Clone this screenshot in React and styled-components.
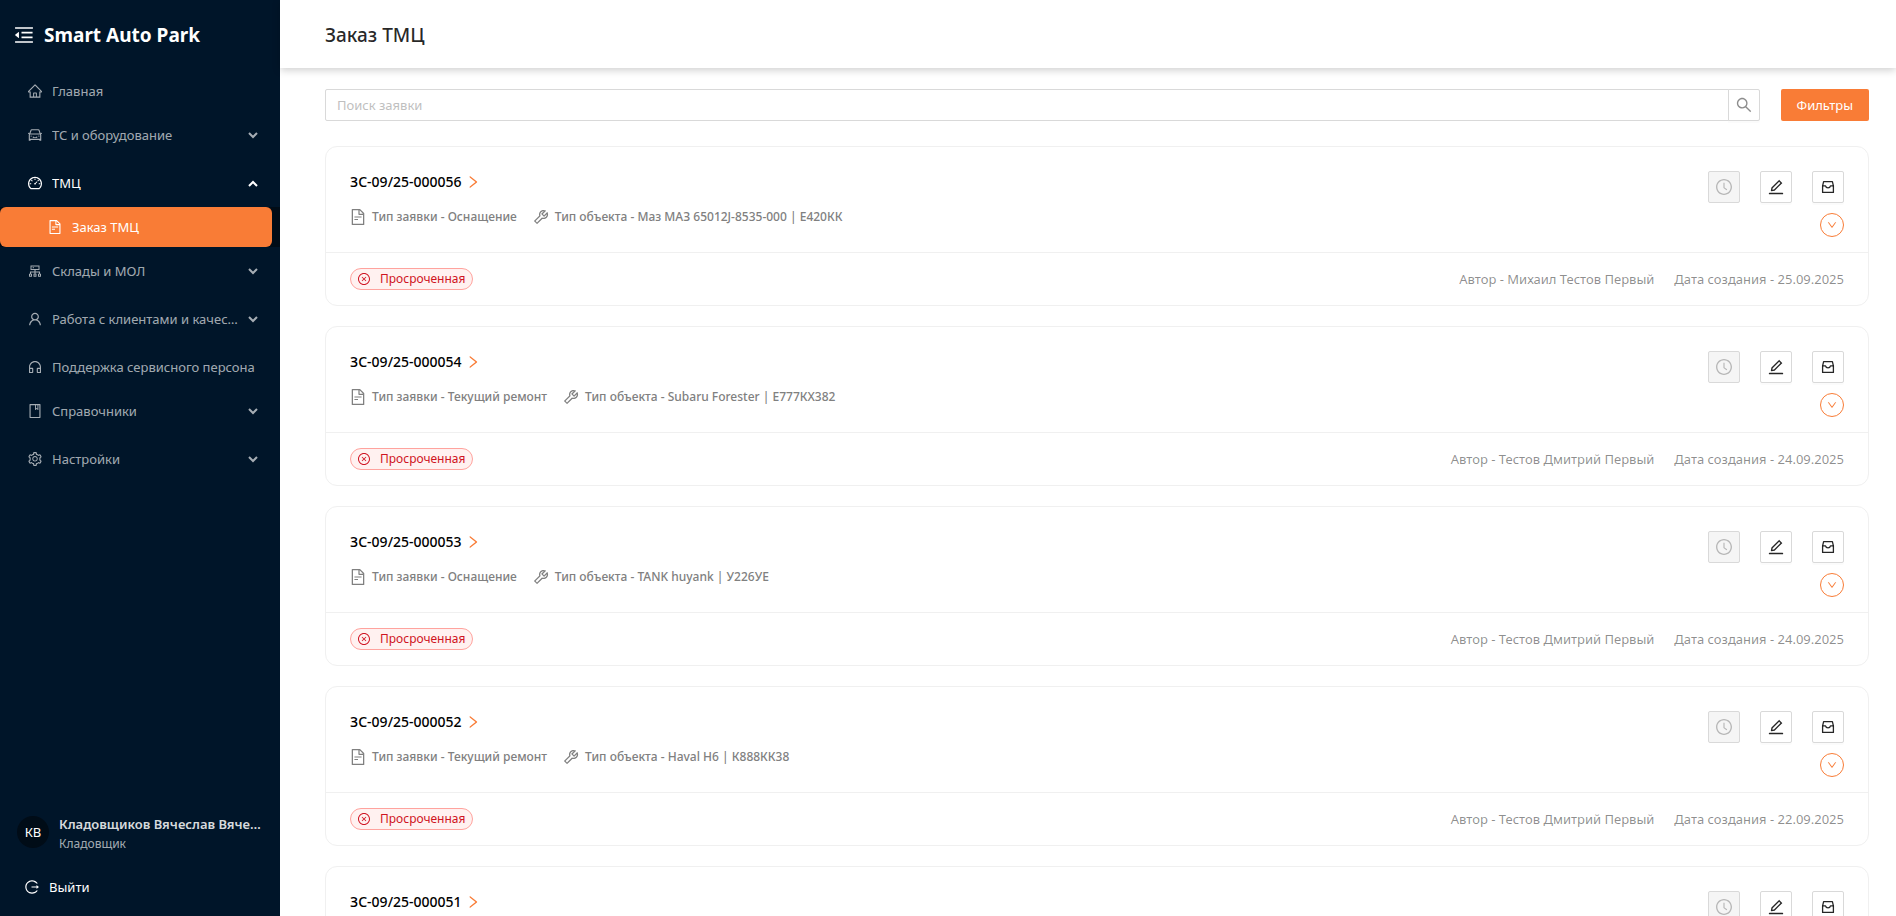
import React, { useState } from 'react';
import styled, { createGlobalStyle } from 'styled-components';
import {
    AiOutlineHome,
    AiOutlineCar,
    AiOutlineDashboard,
    AiOutlineFileText,
    AiOutlineCluster,
    AiOutlineUser,
    AiOutlineCustomerService,
    AiOutlineBook,
    AiOutlineSetting,
    AiOutlineLogout,
    AiOutlineSearch,
    AiOutlineClockCircle,
    AiOutlineEdit,
    AiOutlineMenuFold,
    AiOutlineRight,
    AiOutlineDown,
    AiOutlineTool,
    AiOutlineCloseCircle,
} from 'react-icons/ai';

const menu = [
    { label: 'Главная', icon: AiOutlineHome },
    { label: 'ТС и оборудование', icon: AiOutlineCar, sub: true },
    { label: 'ТМЦ', icon: AiOutlineDashboard, sub: true, items: ['Заказ ТМЦ'] },
    { label: 'Склады и МОЛ', icon: AiOutlineCluster, sub: true },
    { label: 'Работа с клиентами и качеством', icon: AiOutlineUser, sub: true },
    { label: 'Поддержка сервисного персона', icon: AiOutlineCustomerService },
    { label: 'Справочники', icon: AiOutlineBook, sub: true },
    { label: 'Настройки', icon: AiOutlineSetting, sub: true },
];

const orders = [
    { id: 'ЗС-09/25-000056', type: 'Оснащение', object: 'Маз МАЗ 65012J-8535-000 | Е420КК', author: 'Михаил Тестов Первый', date: '25.09.2025' },
    { id: 'ЗС-09/25-000054', type: 'Текущий ремонт', object: 'Subaru Forester | Е777КХ382', author: 'Тестов Дмитрий Первый', date: '24.09.2025' },
    { id: 'ЗС-09/25-000053', type: 'Оснащение', object: 'TANK huyank | У226УЕ', author: 'Тестов Дмитрий Первый', date: '24.09.2025' },
    { id: 'ЗС-09/25-000052', type: 'Текущий ремонт', object: 'Haval H6 | К888КК38', author: 'Тестов Дмитрий Первый', date: '22.09.2025' },
    { id: 'ЗС-09/25-000051', type: 'Оснащение', object: 'Haval H6 | К888КК38', author: 'Тестов Дмитрий Первый', date: '22.09.2025' },
];

// ant icons keep a 64 unit margin round the glyph, crop it
function Icon({ of: Glyph }) {
    return <Glyph viewBox="64 64 896 896" />;
}

function ArchiveIcon() {
    return (
        <svg width="14" height="14" viewBox="0 0 14 14" fill="none" stroke="currentColor" strokeWidth="1.3" strokeLinejoin="round">
            <path d="M1.6 5.8 2.6 1.6h8.8l1 4.2v6.6H1.6z" />
            <path d="M1.6 5.8h2.9c.3 1.3 1.3 2 2.5 2s2.2-.7 2.5-2h2.9" />
        </svg>
    );
}

function Chevron({ open }) {
    return (
        <Arrow width="10" height="7" viewBox="0 0 10 7" $open={open}>
            <path d="M1 1l4 4 4-4" fill="none" stroke="currentColor" strokeWidth="2" />
        </Arrow>
    );
}

function Sidebar() {

    const [opened, setOpened] = useState('ТМЦ');

    return (
        <Aside>
            <Brand>
                <FoldButton type="button" aria-label="Свернуть меню"><Icon of={AiOutlineMenuFold} /></FoldButton>
                <span>Smart Auto Park</span>
            </Brand>
            <Nav>
                {menu.map(({ label, icon, sub, items }) => {
                    const open = opened === label;
                    return (
                        <MenuGroup key={label} $sub={sub && !(open && items)}>
                            {sub ? (
                                <MenuButton type="button" $active={open} onClick={() => setOpened(open ? '' : label)}>
                                    <Icon of={icon} />
                                    <MenuLabel>{label}</MenuLabel>
                                    <Chevron open={open} />
                                </MenuButton>
                            ) : (
                                <MenuLink href="#">
                                    <Icon of={icon} />
                                    <MenuLabel>{label}</MenuLabel>
                                </MenuLink>
                            )}
                            {open && items && (
                                <SubMenu>
                                    {items.map((item) => (
                                        <SubLink key={item} href="#"><Icon of={AiOutlineFileText} /><MenuLabel>{item}</MenuLabel></SubLink>
                                    ))}
                                </SubMenu>
                            )}
                        </MenuGroup>
                    );
                })}
            </Nav>
            <Profile>
                <Avatar>КВ</Avatar>
                <ProfileText>
                    <UserName>Кладовщиков Вячеслав Вячеславович</UserName>
                    <UserRole>Кладовщик</UserRole>
                </ProfileText>
            </Profile>
            <Logout type="button"><Icon of={AiOutlineLogout} /><MenuLabel>Выйти</MenuLabel></Logout>
        </Aside>
    );
}

function OrderCard({ order }) {
    return (
        <Card>
            <CardTop>
                <CardInfo>
                    <CardTitle href="#">{order.id}<Icon of={AiOutlineRight} /></CardTitle>
                    <Details>
                        <Detail><Icon of={AiOutlineFileText} />Тип заявки - {order.type}</Detail>
                        <Detail><Icon of={AiOutlineTool} />Тип объекта - {order.object}</Detail>
                    </Details>
                </CardInfo>
                <CardSide>
                    <Actions>
                        <IconButton type="button" aria-label="История" disabled><Icon of={AiOutlineClockCircle} /></IconButton>
                        <IconButton type="button" aria-label="Изменить"><Icon of={AiOutlineEdit} /></IconButton>
                        <IconButton type="button" aria-label="В архив"><ArchiveIcon /></IconButton>
                    </Actions>
                    <Expand type="button" aria-label="Развернуть"><Icon of={AiOutlineDown} /></Expand>
                </CardSide>
            </CardTop>
            <CardBottom>
                <Tag><Icon of={AiOutlineCloseCircle} />Просроченная</Tag>
                <Meta>
                    <span>Автор - {order.author}</span>
                    <span>Дата создания - {order.date}</span>
                </Meta>
            </CardBottom>
        </Card>
    );
}

function App() {
    return (
        <Layout>
            <GlobalStyle />
            <Sidebar />
            <Main>
                <Header><h1>Заказ ТМЦ</h1></Header>
                <Content>
                    <Toolbar>
                        <Search>
                            <input type="text" placeholder="Поиск заявки" aria-label="Поиск заявки" />
                            <SearchButton type="button" aria-label="Найти"><Icon of={AiOutlineSearch} /></SearchButton>
                        </Search>
                        <FilterButton type="button">Фильтры</FilterButton>
                    </Toolbar>
                    {orders.map((order) => (
                        <OrderCard key={order.id} order={order} />
                    ))}
                </Content>
            </Main>
        </Layout>
    );
}

export default App;


const GlobalStyle = createGlobalStyle`

    * {
        box-sizing: border-box;
    }

    body {
        margin: 0;
        background: #fff;
        color: rgba(0,0,0,.85);
        font-family: "Noto Sans", "Open Sans", sans-serif;
        font-size: 13px;
        line-height: 22px;
    }

    button, input {
        font: inherit;
        color: inherit;
    }

    button {
        cursor: pointer;
    }

    a {
        text-decoration: none;
    }

    svg {
        flex: none;
    }

`

const Layout = styled.div`

    display: flex;
    height: 100vh;
    overflow: hidden;

`

const Aside = styled.aside`

    display: flex;
    flex-direction: column;
    flex: none;
    width: 280px;
    background: #001529;
    color: #fff;

`

const Brand = styled.div`

    display: flex;
    align-items: center;
    gap: 10px;
    height: 71px;
    padding: 0 14px 2px;
    font-size: 19px;
    font-weight: 700;

`

const FoldButton = styled.button`

    display: flex;
    padding: 0;
    border: 0;
    background: none;
    font-size: 20px;

`

const Nav = styled.nav`

    display: flex;
    flex-direction: column;
    flex: 1;

`

const MenuGroup = styled.div`

    margin-bottom: ${props => props.$sub ? '8px' : '4px'};

`

const MenuLink = styled.a`

    display: flex;
    align-items: center;
    gap: 10px;
    width: 100%;
    height: 40px;
    padding: 0 20px 0 28px;
    border: 0;
    background: none;
    color: ${props => props.$active ? '#fff' : 'rgba(255,255,255,.65)'};
    font-size: 14px;
    text-align: left;

`

const MenuButton = styled(MenuLink).attrs({ as: 'button' })``

const MenuLabel = styled.span`

    flex: 1;
    overflow: hidden;
    font-size: 13px;
    text-align: left;
    text-overflow: ellipsis;
    white-space: nowrap;

`

const Arrow = styled.svg`

    margin: 0 2px 0 -2px;
    transform: ${props => props.$open ? 'rotate(180deg)' : 'none'};

`

const SubMenu = styled.div`

    margin-top: 4px;
    background: #000c17;

`

const SubLink = styled.a`

    display: flex;
    align-items: center;
    gap: 10px;
    height: 40px;
    margin-right: 8px;
    padding-left: 48px;
    border-radius: 6px;
    background: #f97c36;
    color: #fff;
    font-size: 14px;

`

const Profile = styled.div`

    display: flex;
    align-items: center;
    gap: 10px;
    padding: 0 16px 0 17px;

`

const Avatar = styled.div`

    flex: none;
    width: 32px;
    height: 32px;
    border-radius: 50%;
    background: #000c17;
    line-height: 32px;
    text-align: center;

`

const ProfileText = styled.div`

    overflow: hidden;
    padding-top: 4px;

`

const UserName = styled.div`

    overflow: hidden;
    color: rgba(255,255,255,.85);
    font-weight: 600;
    line-height: 20px;
    text-overflow: ellipsis;
    white-space: nowrap;

`

const UserRole = styled.div`

    color: rgba(255,255,255,.65);
    font-size: 12px;
    line-height: 20px;

`

const Logout = styled.button`

    display: flex;
    align-items: center;
    gap: 10px;
    margin: 22px 0 18px;
    padding: 0 25px;
    border: 0;
    background: none;
    font-size: 14px;

`

const Main = styled.main`

    display: flex;
    flex-direction: column;
    flex: 1;
    min-width: 0;

`

const Header = styled.header`

    display: flex;
    align-items: center;
    flex: none;
    height: 68px;
    padding: 2px 45px 0;
    box-shadow: 0 2px 8px rgba(0,0,0,.2);

    h1 {
        margin: 0;
        font-size: 19px;
        font-weight: 500;
        line-height: 28px;
    }

`

const Content = styled.div`

    flex: 1;
    overflow: hidden;
    padding: 21px 27px 0 45px;

`

const Toolbar = styled.div`

    display: flex;
    gap: 21px;
    margin-bottom: 25px;

`

const Search = styled.div`

    display: flex;
    flex: 1;

    input {
        flex: 1;
        min-width: 0;
        height: 32px;
        padding: 4px 11px;
        border: 1px solid #d9d9d9;
        border-radius: 2px 0 0 2px;
        outline: none;
    }

    input::placeholder {
        color: #bfbfbf;
    }

`

const SearchButton = styled.button`

    display: flex;
    align-items: center;
    justify-content: center;
    width: 32px;
    height: 32px;
    margin-left: -1px;
    padding: 0;
    border: 1px solid #d9d9d9;
    border-radius: 0 2px 2px 0;
    background: #fff;
    box-shadow: 0 2px 0 rgba(0,0,0,.016);
    color: rgba(0,0,0,.45);
    font-size: 16px;

`

const FilterButton = styled.button`

    height: 32px;
    padding: 0 16px;
    border: 0;
    border-radius: 2px;
    background: #f97c36;
    color: #fff;

`

const Card = styled.article`

    margin-bottom: 20px;
    border: 1px solid #f0f0f0;
    border-radius: 12px;

`

const CardTop = styled.div`

    display: flex;
    justify-content: space-between;
    padding: 24px 24px 15px;
    border-bottom: 1px solid #f0f0f0;

`

const CardInfo = styled.div`

    display: flex;
    flex-direction: column;
    gap: 13px;

`

const CardTitle = styled.a`

    display: flex;
    align-items: center;
    gap: 4px;
    color: #000;
    font-size: 14px;
    font-weight: 500;

    svg {
        color: #f97c36;
    }

`

const Details = styled.div`

    display: flex;
    gap: 16px;

`

const Detail = styled.span`

    display: flex;
    align-items: center;
    gap: 6px;
    color: #808080;
    font-size: 12px;
    font-weight: 500;

    svg {
        font-size: 16px;
    }

`

const CardSide = styled.div`

    display: flex;
    flex-direction: column;
    align-items: flex-end;
    gap: 10px;

`

const Actions = styled.div`

    display: flex;
    gap: 20px;

`

const IconButton = styled.button`

    display: flex;
    align-items: center;
    justify-content: center;
    width: 32px;
    height: 32px;
    padding: 0;
    border: 1px solid #d9d9d9;
    border-radius: 2px;
    background: #fff;
    box-shadow: 0 2px 0 rgba(0,0,0,.016);
    font-size: 16px;

    &:disabled {
        background: #f5f5f5;
        box-shadow: none;
        color: rgba(0,0,0,.25);
    }

`

const Expand = styled.button`

    display: flex;
    align-items: center;
    justify-content: center;
    flex: none;
    width: 24px;
    height: 24px;
    padding: 0;
    border: 1px solid #f97c36;
    border-radius: 50%;
    background: #fff;
    color: #f97c36;
    font-size: 10px;

`

const CardBottom = styled.div`

    display: flex;
    align-items: center;
    justify-content: space-between;
    height: 52px;
    padding: 0 24px;

`

const Tag = styled.span`

    display: flex;
    align-items: center;
    gap: 10px;
    height: 22px;
    padding: 0 7px;
    border: 1px solid #ffa39e;
    border-radius: 11px;
    background: #fff1f0;
    color: #cf1322;
    font-size: 12px;

`

const Meta = styled.div`

    display: flex;
    gap: 20px;
    color: rgba(0,0,0,.45);

`
